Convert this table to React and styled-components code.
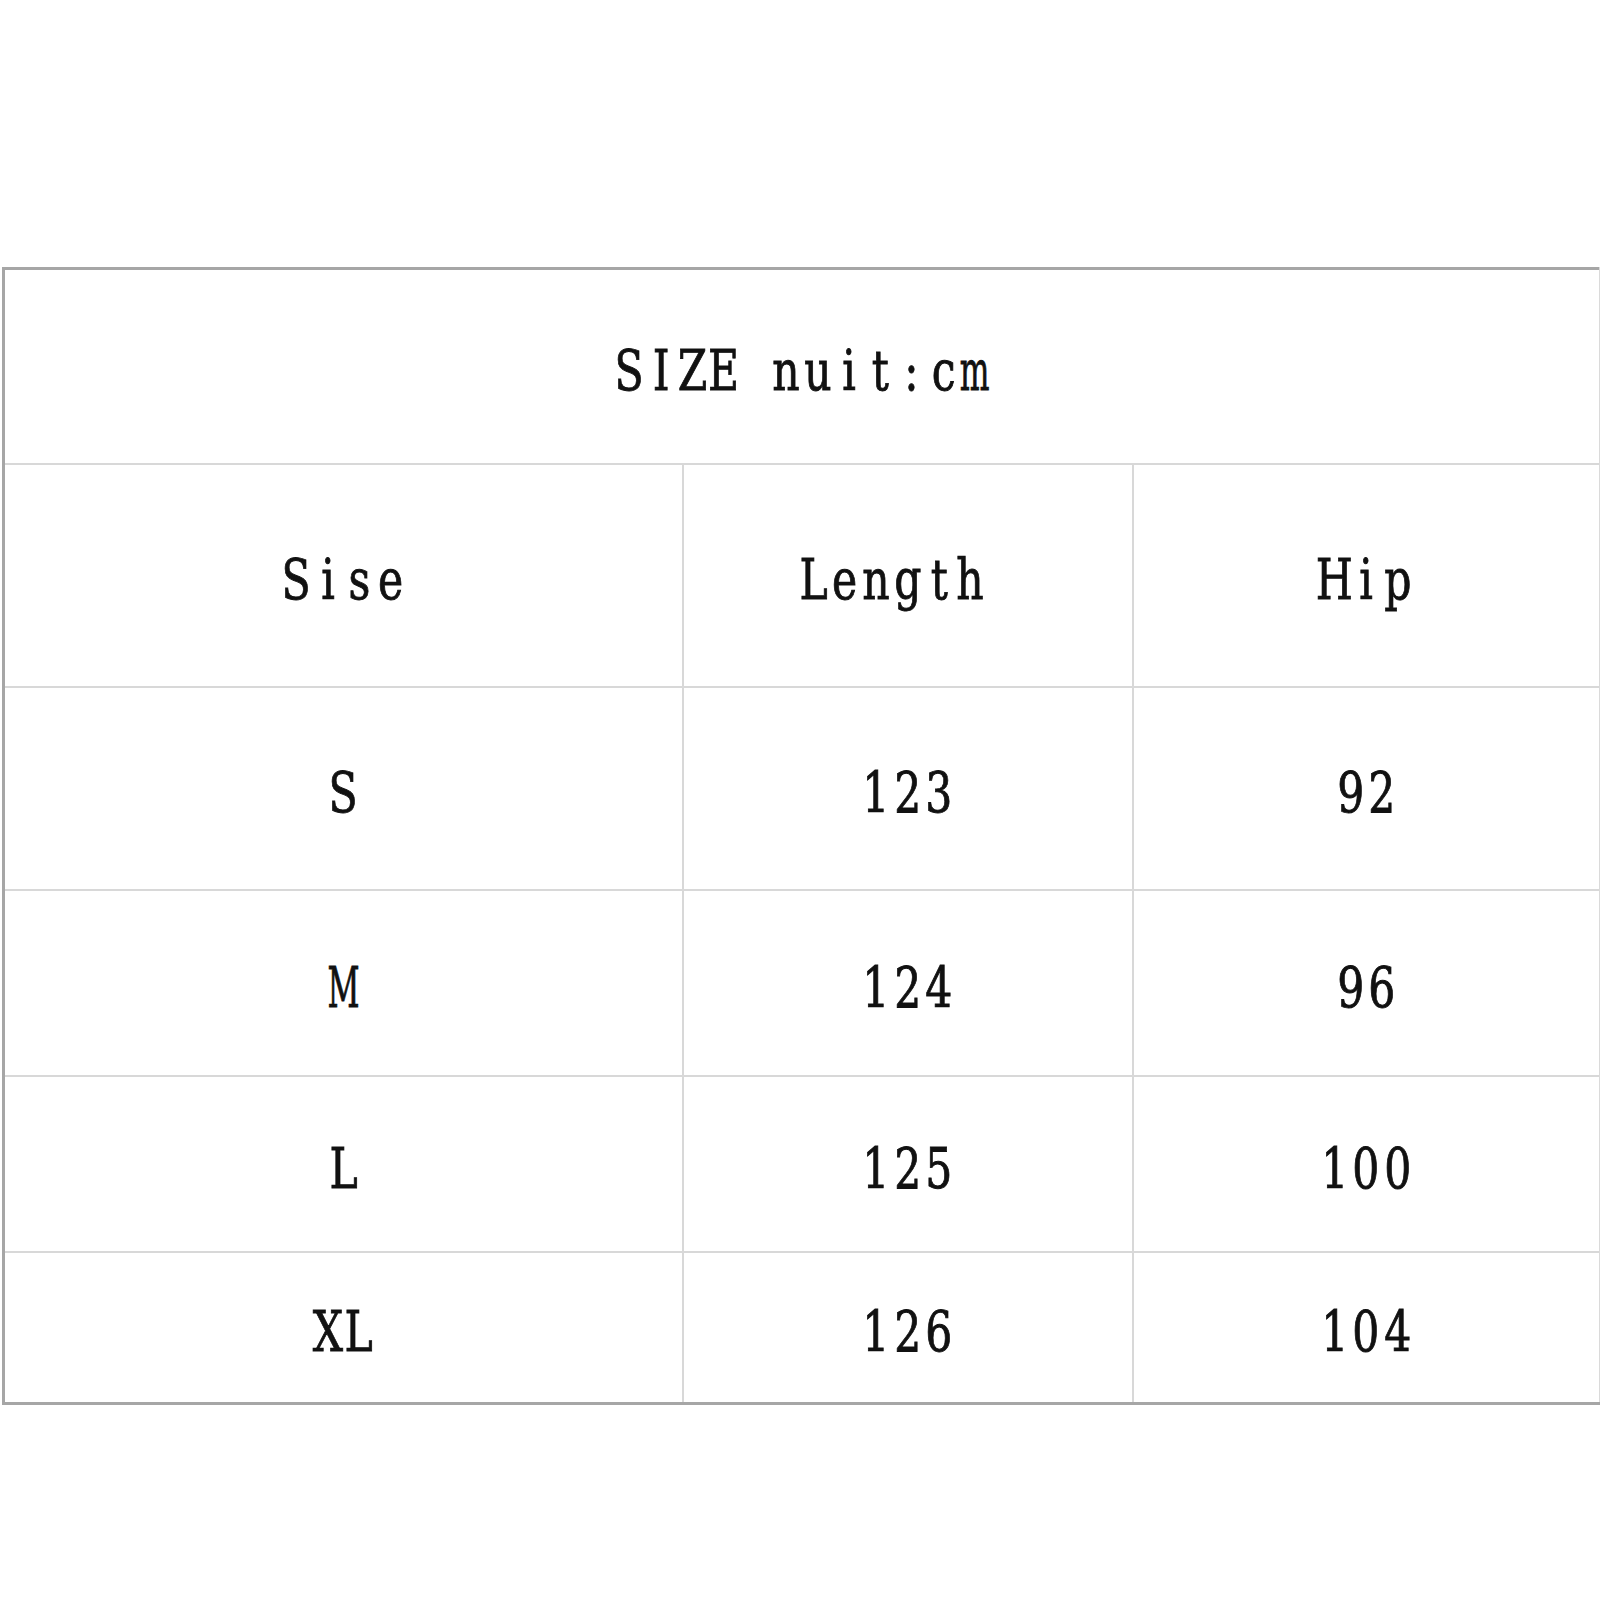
import React from "react";
import styled, { createGlobalStyle } from "styled-components";

const GlobalStyle = createGlobalStyle`
  html, body {
    margin: 0;
    padding: 0;
    background: #fff;
  }
`;

const Page = styled.div`
  width: 1600px;
  height: 1600px;
  padding-top: 267px;
  padding-left: 2px;
  box-sizing: border-box;
  overflow: hidden;
`;

const SizeTable = styled.table`
  width: 1597px;
  border-collapse: collapse;
  table-layout: fixed;
  border-top: 3px solid #a6a6a6;
  border-left: 3px solid #a6a6a6;
  border-bottom: 3px solid #a6a6a6;
  border-right: 3px solid #dadada;
  font-family: "DejaVu Serif", "Liberation Serif", serif;
  font-size: 56px;
  font-weight: 400;
  line-height: 1;
  color: #111;
`;

const Row = styled.tr`
  height: ${(p) => p.h}px;
`;

const Cell = styled.td`
  border: 2px solid #d8d8d8;
  text-align: center;
  vertical-align: middle;
  padding: 10px 0 0 0;
  white-space: nowrap;
`;

const TitleCell = styled(Cell)`
  border-top: none;
`;

// SimSun-like half-width cells: every character gets the same advance
const Glyph = styled.span`
  display: inline-flex;
  justify-content: center;
  width: 31.4px;
`;

const Ink = styled.span`
  display: inline-block;
  transform: scaleX(${(p) => (p.$narrow ? 0.56 : 0.76)});
  -webkit-text-stroke: 0.9px #111;
`;

const Mono = ({ text }) => (
  <>
    {[...text].map((c, i) => (
      <Glyph key={i}>
        <Ink $narrow={c === "M" || c === "m"}>{c === " " ? "\u00a0" : c}</Ink>
      </Glyph>
    ))}
  </>
);

const rows = [
  { size: "S", length: "123", hip: "92", h: 203 },
  { size: "M", length: "124", hip: "96", h: 186 },
  { size: "L", length: "125", hip: "100", h: 176 },
  { size: "XL", length: "126", hip: "104", h: 152 },
];

const App = () => {
  return (
    <>
      <GlobalStyle />
      <Page>
        <SizeTable>
          <colgroup>
            <col style={{ width: 679 }} />
            <col style={{ width: 450 }} />
            <col style={{ width: 468 }} />
          </colgroup>
          <tbody>
            <Row h={195}>
              <TitleCell colSpan={3}>
                <Mono text="SIZE nuit:cm" />
              </TitleCell>
            </Row>
            <Row h={223}>
              <Cell>
                <Mono text="Sise" />
              </Cell>
              <Cell>
                <Mono text="Length " />
              </Cell>
              <Cell>
                <Mono text="Hip" />
              </Cell>
            </Row>
            {rows.map((r) => (
              <Row h={r.h} key={r.size}>
                <Cell>
                  <Mono text={r.size} />
                </Cell>
                <Cell>
                  <Mono text={r.length} />
                </Cell>
                <Cell>
                  <Mono text={r.hip} />
                </Cell>
              </Row>
            ))}
          </tbody>
        </SizeTable>
      </Page>
    </>
  );
};

export default App;
